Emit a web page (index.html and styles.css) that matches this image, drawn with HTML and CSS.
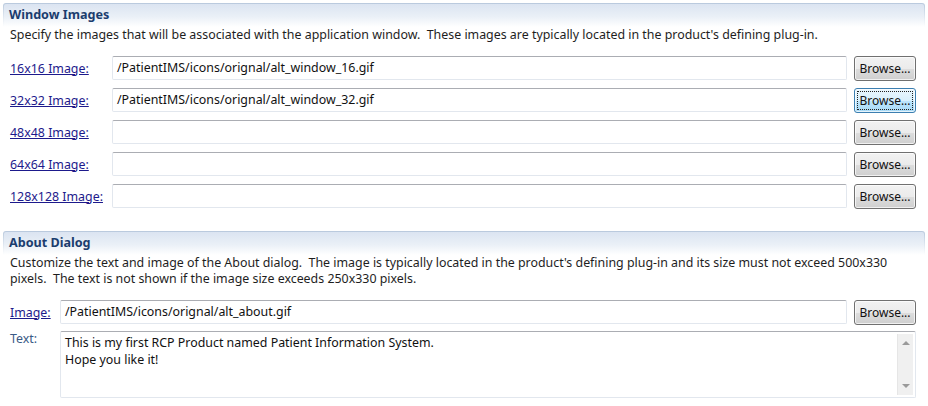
FILE: index.html
```html
<!DOCTYPE html>
<html>
<head>
<meta charset="utf-8">
<link rel="stylesheet" href="styles.css">
</head>
<body>
<div class="page">
  <section class="section">
    <div class="head-frame"><div class="head">Window Images</div></div>
    <p class="desc">Specify the images that will be associated with the application window.&nbsp; These images are typically located in the product's defining plug-in.</p>
    <div class="rows wide">
      <div class="row"><a class="link" href="#">16x16 Image:</a><div class="field">/PatientIMS/icons/orignal/alt_window_16.gif</div><button class="btn">Browse...</button></div>
      <div class="row"><a class="link" href="#">32x32 Image:</a><div class="field">/PatientIMS/icons/orignal/alt_window_32.gif</div><button class="btn focus"><span class="focus-rect">Browse...</span></button></div>
      <div class="row"><a class="link" href="#">48x48 Image:</a><div class="field"></div><button class="btn">Browse...</button></div>
      <div class="row"><a class="link" href="#">64x64 Image:</a><div class="field"></div><button class="btn">Browse...</button></div>
      <div class="row"><a class="link" href="#">128x128 Image:</a><div class="field"></div><button class="btn">Browse...</button></div>
    </div>
  </section>
  <section class="section second">
    <div class="head-frame"><div class="head">About Dialog</div></div>
    <p class="desc">Customize the text and image of the About dialog.&nbsp; The image is typically located in the product's defining plug-in and its size must not exceed 500x330 pixels.&nbsp; The text is not shown if the image size exceeds 250x330 pixels.</p>
    <div class="rows narrow">
      <div class="row"><a class="link" href="#">Image:</a><div class="field">/PatientIMS/icons/orignal/alt_about.gif</div><button class="btn">Browse...</button></div>
      <div class="row text-row"><span class="plain">Text:</span>
        <div class="area">
          <div class="area-text">This is my first RCP Product named Patient Information System.<br>Hope you like it!</div>
          <div class="scroll"><span class="arrow up"></span><span class="arrow down"></span></div>
        </div>
      </div>
    </div>
  </section>
</div>
</body>
</html>
```
FILE: styles.css
```css
html, body {
  margin: 0;
  padding: 0;
  background: #ffffff;
}
body {
  font-family: "Noto Sans", "Open Sans", sans-serif;
  font-size: 12.4px;
  color: #1e1e1e;
}
.page {
  padding: 3px 3px 0 3px;
  width: 922px;
}
.section.second {
  margin-top: 23px;
}
.head-frame {
  padding: 1px 1px 0 1px;
  border-radius: 3px 3px 0 0;
  background: linear-gradient(to bottom, #b9c9dd 0%, #d3deeb 40%, #ffffff 100%);
}
.head {
  height: 23px;
  line-height: 22px;
  padding-left: 5px;
  border-radius: 2px 2px 0 0;
  background: linear-gradient(to bottom, #dbe4f1 0%, #eaf0f7 55%, #ffffff 100%);
  font-weight: bold;
  font-size: 12.6px;
  color: #1b3d6e;
}
.desc {
  margin: 0;
  padding: 0 8px 0 7px;
  line-height: 16px;
  margin-top: 0;
}
.rows {
  display: flex;
  flex-direction: column;
  gap: 8px;
  padding-left: 7px;
}
.rows.wide {
  margin-top: 13px;
}
.rows.narrow {
  margin-top: 13px;
}
.row {
  display: flex;
  align-items: center;
  height: 24px;
}
.link {
  color: #1d1a8c;
  text-decoration: underline;
  flex: none;
}
.wide .link { width: 102px; }
.narrow .link, .narrow .plain { width: 50px; }
.plain {
  color: #3a5a86;
  flex: none;
}
.field {
  flex: none;
  box-sizing: border-box;
  height: 24px;
  border: 1px solid #e2e7ee;
  border-top-color: #abadb3;
  border-radius: 2px;
  padding: 0 4px;
  line-height: 22px;
  color: #111;
  white-space: nowrap;
  overflow: hidden;
}
.wide .field { width: 735px; }
.narrow .field { width: 787px; }
.btn {
  flex: none;
  margin-left: 7px;
  box-sizing: border-box;
  width: 62px;
  height: 25px;
  padding: 0;
  border: 1px solid #707070;
  border-radius: 3px;
  background: linear-gradient(to bottom, #f2f2f2 0%, #ebebeb 50%, #dddddd 51%, #cfcfcf 100%);
  font-family: inherit;
  font-size: 12px;
  color: #111;
  box-shadow: inset 0 0 0 1px rgba(255,255,255,0.7);
}
.btn.focus {
  border-color: #3c7fb1;
  background: linear-gradient(to bottom, #eaf6fd 0%, #d9f0fc 50%, #bee6fd 51%, #a7d9f5 100%);
  padding: 2px;
}
.focus-rect {
  display: block;
  height: 100%;
  box-sizing: border-box;
  border: 1px dotted #222;
  line-height: 17px;
}
.text-row {
  align-items: flex-start;
  height: auto;
  margin-top: -1px;
}
.text-row .plain {
  line-height: 16px;
  margin-top: 0;
}
.area {
  flex: none;
  box-sizing: border-box;
  width: 856px;
  height: 67px;
  border: 1px solid #e2e7ee;
  border-top-color: #abadb3;
  border-radius: 2px;
  display: flex;
  background: #fff;
}
.area-text {
  flex: 1;
  padding: 2px 4px;
  line-height: 17px;
  color: #111;
}
.scroll {
  flex: none;
  width: 16px;
  margin: 2px 2px 2px 0;
  background: #f0f0f0;
  border-left: 1px solid #e6e6e6;
  display: flex;
  flex-direction: column;
  justify-content: space-between;
  align-items: center;
  padding: 7px 0;
  box-sizing: border-box;
}
.arrow {
  width: 0;
  height: 0;
  border-left: 4px solid transparent;
  border-right: 4px solid transparent;
}
.arrow.up { border-bottom: 4px solid #9a9a9a; }
.arrow.down { border-top: 4px solid #9a9a9a; }
```
